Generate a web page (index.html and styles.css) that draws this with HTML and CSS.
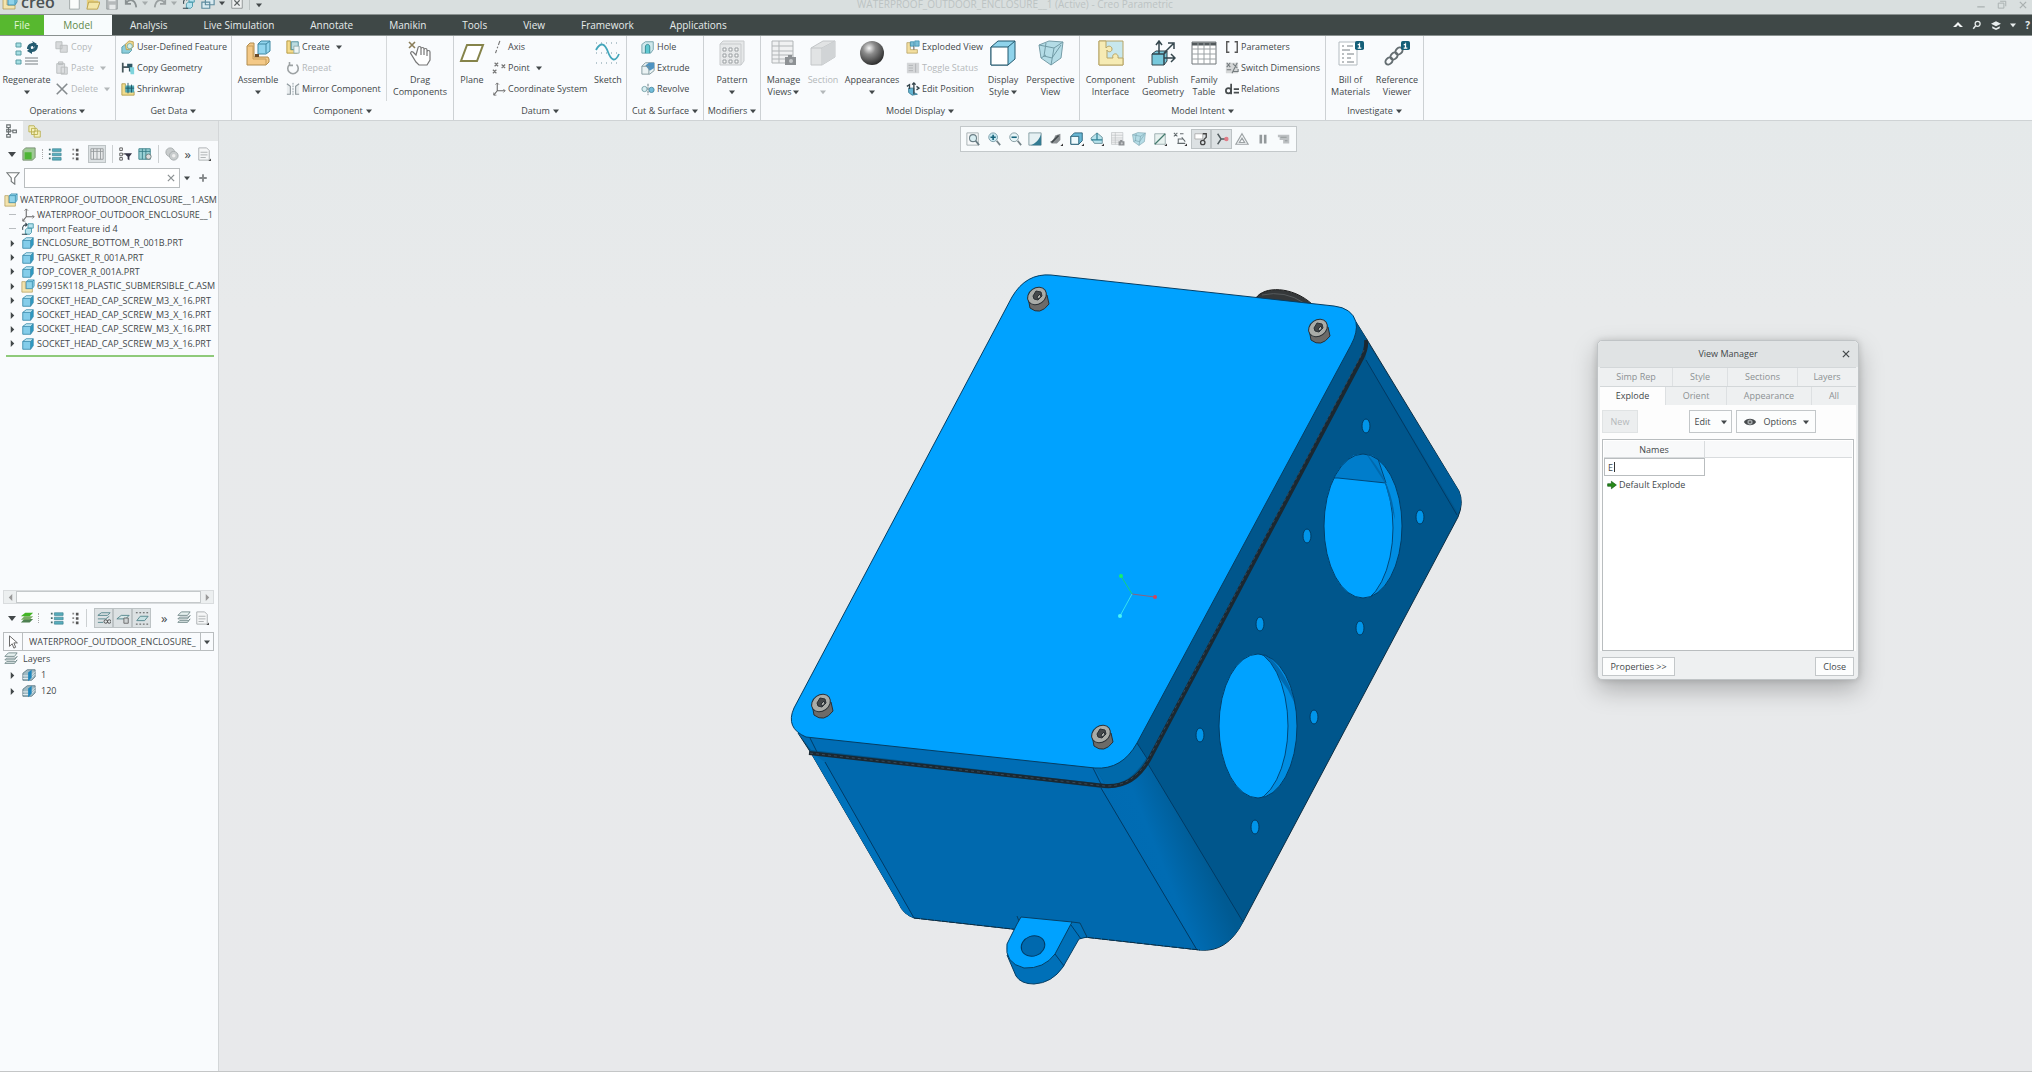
FILE: index.html
```html
<!DOCTYPE html>
<html lang="en">
<head>
<meta charset="utf-8">
<title>WATERPROOF_OUTDOOR_ENCLOSURE__1 (Active) - Creo Parametric</title>
<link rel="stylesheet" href="styles.css">
</head>
<body>
<svg class="sprite" aria-hidden="true">
  <symbol id="cube" viewBox="0 0 16 16"><path d="M2 5l4-3h8v8l-3 4H2z" fill="#2f9cc4"/><path d="M2 5l4-3h8l-3 3z" fill="#c3ecf8"/><path d="M2 5h9v9H2z" fill="#84cdea"/><path d="M2 5l4-3h8v8l-3 4H2zM2 5h9v9M11 5l3-3" fill="none" stroke="#3583a3" stroke-width=".8"/></symbol>
  <symbol id="asm" viewBox="0 0 16 16"><path d="M1 3h4v8h8v4H1z" fill="#f3e4ae" stroke="#b09a58" stroke-width=".8"/><path d="M6 3l2-2h7v7l-2 3H6z" fill="#8fd3ea" stroke="#2f86a8" stroke-width=".8"/><path d="M6 3h7v7M13 3l2-2" fill="none" stroke="#2f86a8" stroke-width=".8"/></symbol>
  <symbol id="csys" viewBox="0 0 16 16"><path d="M6 1v9h9M6 10l-4 5" fill="none" stroke="#666" stroke-width="1.2"/><path d="M4 3l2-2 2 2M13 8l2 2-2 2M2 12v3h3" fill="none" stroke="#777"/></symbol>
  <symbol id="import" viewBox="0 0 16 16"><path d="M8 2h6v5H8zM5 9l2-2h5v5l-2 2H5z" fill="#b5e2ee" stroke="#4596a8"/><path d="M2 9c-1-5 2-6 5-6M5 1l2 2-2 2M1 14h6" fill="none" stroke="#36474f" stroke-width="1.2"/></symbol>
  <symbol id="copy" viewBox="0 0 16 16"><path d="M1 2h7v8H1zM6 6h8v8H6z" fill="#d8dadc" stroke="#b8bbbd"/></symbol>
  <symbol id="paste" viewBox="0 0 16 16"><path d="M2 3h9v11H2zM4 1h5v3H4zM7 7h7v8H7z" fill="#dcdee0" stroke="#b8bbbd"/></symbol>
  <symbol id="delete" viewBox="0 0 16 16"><path d="M2 2l12 12M14 2L2 14" stroke="#858b8e" stroke-width="1.8"/></symbol>
  <symbol id="udf" viewBox="0 0 16 16"><path d="M1 8l4-3h7v7l-3 3H1z" fill="#8acddc" stroke="#5799a5"/><path d="M5 5l4-4 5 1v6l-4 3H6z" fill="#f1d98d" stroke="#b89b4c"/><circle cx="10" cy="7" r="3" fill="#d6eee9" stroke="#76aaa5"/></symbol>
  <symbol id="copygeom" viewBox="0 0 16 16"><path d="M2 2v11M2 7h8" stroke="#46565c" stroke-width="2"/><path d="M7 3h6v9H9V7H7z" fill="#2f5664"/><path d="M10 7h5v8h-4z" fill="#7ed4dd"/></symbol>
  <symbol id="shrink" viewBox="0 0 16 16"><path d="M1 2h4v9h10v4H1z" fill="#f0dc8e" stroke="#b49e4d"/><path d="M5 4h10v8H5z" fill="#4fa9b5"/><path d="M8 1v12M5 7h10M12 3v9" stroke="#1b5362"/></symbol>
  <symbol id="create" viewBox="0 0 16 16"><path d="M1 1h4v10h8v4H1z" fill="#f5dc8c" stroke="#b09338"/><path d="M6 2h8v9H6z" fill="#bcdce0" stroke="#488c98"/><path d="M9 7h6v8H9z" fill="#eef5f4" stroke="#8eaaab"/></symbol>
  <symbol id="repeat" viewBox="0 0 16 16"><path d="M4 4a6 6 0 1 0 8 0M4 1v4h4" fill="none" stroke="#9da2a4" stroke-width="1.8"/></symbol>
  <symbol id="mirror" viewBox="0 0 16 16"><path d="M1 2l4 3v9H1M15 2l-4 3v9h4" fill="#e9edef" stroke="#8e989d" stroke-width="1.3"/><path d="M8 1v14" stroke="#829098" stroke-dasharray="2 1"/></symbol>
  <symbol id="axis" viewBox="0 0 16 16"><path d="M9 1L4 15" stroke="#777" stroke-width="1.3" stroke-dasharray="5 2 2 2"/></symbol>
  <symbol id="point" viewBox="0 0 16 16"><path d="M3 2l4 4M7 2L3 6M11 4l4 4M15 4l-4 4M1 10l4 4M5 10l-4 4" stroke="#777" stroke-width="1.3"/></symbol>
  <symbol id="hole" viewBox="0 0 16 16"><path d="M1 5l4-3h9v9l-3 4H1z" fill="#cfe8ec" stroke="#6d9da6"/><path d="M5 15V8c0-4 5-4 5 0v7" fill="#5fc8d1" stroke="#2c838e"/></symbol>
  <symbol id="extrude" viewBox="0 0 16 16"><path d="M1 6l4-4h10v9l-5 4H1z" fill="#eaf2f3" stroke="#7b9298"/><path d="M5 5l4-3h6v6l-5 3z" fill="#4e93c2"/><path d="M1 6h8v9" fill="none" stroke="#7b9298"/></symbol>
  <symbol id="revolve" viewBox="0 0 16 16"><circle cx="4" cy="8" r="3" fill="#d8eef1" stroke="#6f9ba4"/><circle cx="12" cy="9" r="3" fill="#73bddb" stroke="#4c899f"/><path d="M8 2v13" stroke="#536c74" stroke-dasharray="3 1"/></symbol>
  <symbol id="exploded" viewBox="0 0 16 16"><path d="M1 3h4v8h8v4H1z" fill="#f3dfa0" stroke="#b09a58" stroke-width=".8"/><path d="M5 2h4v5H5zM10 1h5v6h-5z" fill="#78bdd6" stroke="#2f86a8" stroke-width=".8"/><path d="M9 7v4" stroke="#444"/></symbol>
  <symbol id="toggle" viewBox="0 0 16 16"><path d="M1 2h14v12H1z" fill="#d4d6d8"/><path d="M3 5h5M3 8h5M3 11h5M11 3v10" stroke="#aeb1b4"/></symbol>
  <symbol id="editpos" viewBox="0 0 16 16"><path d="M3 7h6v5l4 2-6 1-4-3z" fill="#64b5d4" stroke="#397c94"/><path d="M9 1v13M7 3l2-2 2 2M12 5l3 2-3 2M1 5l3-2v5" fill="none" stroke="#33434a" stroke-width="1.5"/></symbol>
  <symbol id="params" viewBox="0 0 16 16"><path d="M5 2H2v12h3M11 2h3v12h-3" fill="none" stroke="#555" stroke-width="1.6"/></symbol>
  <symbol id="switch" viewBox="0 0 16 16"><path d="M1 2h14v12H1z" fill="#d4d6d7"/><path d="M2 2l4 5M6 2L2 7M8 14l6-12M2 10h5M9 12h6v-3M9 3l5 5" stroke="#747b7e" stroke-width="1.2" fill="none"/></symbol>
  <symbol id="relations" viewBox="0 0 16 16"><circle cx="4" cy="10" r="3" fill="none" stroke="#484d4f" stroke-width="2"/><path d="M7 2v12M10 8h6M10 12h6" stroke="#484d4f" stroke-width="2"/></symbol>
  <symbol id="regen" viewBox="0 0 26 26"><path d="M2 3h5v4H2zM2 11h5v4H2zM2 20h5v4H2z" fill="#a6dfe3" stroke="#5b9da5"/><path d="M11 18h13M11 21h13M11 24h13" stroke="#777e82"/><path d="M13 9c0-4 3-6 6-6l-1-2 5 3-4 4v-2c-2 0-3 1-3 3zM24 5c0 4-2 7-6 7v2l-5-3 4-4v2c3 0 4-2 4-4z" fill="#245b70"/></symbol>
  <symbol id="assemble" viewBox="0 0 26 26"><path d="M2 6l3-3h4v14h14l1 2v3l-3 3H2z" fill="#f4c987" stroke="#b08c4e"/><path d="M2 6h6v13h13v6" fill="none" stroke="#c69d5a"/><path d="M13 4l3-3h9v10l-4 3h-8z" fill="#92d5ee" stroke="#3f87a2"/><path d="M13 4h8v9M21 4l4-3" fill="none" stroke="#3f87a2"/><path d="M10 14h4v3h-4z" fill="#6d4c28"/></symbol>
  <symbol id="hand" viewBox="0 0 26 26"><path d="M9 15l-3-3c-2-1-3 1-2 2l5 8 3 3h8l3-5v-8c0-2-3-2-3 0v-2c0-2-3-2-3 0V9c0-2-3-2-3 0V8c0-2-3-2-3 0zM14 9v6M17 10v5M20 12v4" fill="#fff" stroke="#777" stroke-width="1.2"/><path d="M2 2l6 6M8 2L2 8" stroke="#8a7d58" stroke-width="1.6"/></symbol>
  <symbol id="plane" viewBox="0 0 26 26"><path d="M8 5h16l-6 16H2z" fill="#fff" stroke="#85834a" stroke-width="2"/></symbol>
  <symbol id="sketch" viewBox="0 0 26 26"><path d="M1 3h24M1 13h24M1 23h24" stroke="#7494a1" stroke-dasharray="1 4"/><path d="M1 10C6 1 10 4 13 12s7 11 11 2" fill="none" stroke="#43a6bb" stroke-width="1.8"/></symbol>
  <symbol id="pattern" viewBox="0 0 26 26"><path d="M1 4l3-3h21v20l-3 4H1z" fill="#e6e8e9" stroke="#c8cbcd"/><path d="M1 4h21v21" fill="none" stroke="#c8cbcd"/><path d="M4 8h3v3H4zM10 8h3v3h-3zM16 8h3v3h-3zM4 14h3v3H4zM10 14h3v3h-3zM16 14h3v3h-3zM4 20h3v3H4zM10 20h3v3h-3zM16 20h3v3h-3z" fill="#f9fafa" stroke="#9a9fa2"/></symbol>
  <symbol id="manage" viewBox="0 0 26 26"><path d="M1 1h21v22H1zM1 6h21M1 11h21M1 15h21M1 19h21M8 1v22" fill="#f0f1f2" stroke="#b1b5b7"/><path d="M14 17h11v8H14zM17 15h4v3h-4z" fill="#8d9194"/><circle cx="20" cy="21" r="2" fill="#c5c8ca"/></symbol>
  <symbol id="section" viewBox="0 0 26 26"><path d="M1 8l12-7h12v16l-13 8H1z" fill="#e1e3e4" stroke="#c3c6c8"/><path d="M1 8h11v17M12 8l13-7" fill="none" stroke="#c3c6c8"/><path d="M12 8l13-7v16l-13 8z" fill="#d1d4d6"/></symbol>
  <symbol id="sphere" viewBox="0 0 26 26"><circle cx="13" cy="13" r="12" fill="url(#ball)"/></symbol>
  <symbol id="display" viewBox="0 0 26 26"><path d="M1 7l7-6h17v18l-7 6H1z" fill="#8fd3eb" stroke="#23596e"/><path d="M1 7h17v18H1z" fill="#fff" stroke="#23596e"/><path d="M18 7l7-6" stroke="#23596e"/></symbol>
  <symbol id="persp" viewBox="0 0 26 26"><path d="M1 5l10-4 14 1-2 16-10 7L3 18z" fill="#b4dce6" stroke="#769da8"/><path d="M1 5l15 3 9-6M16 8l-3 17M8 3l-2 13 8 2 9-13M3 18l5-3" fill="none" stroke="#719ba6"/></symbol>
  <symbol id="interface" viewBox="0 0 26 26"><path d="M1 1h24v24H1z" fill="#c7e7ed" stroke="#b7a464"/><path d="M1 1h7v7c2-3 6-2 6 1 0 4-5 3-5 1v8h6c-2-5 6-6 5 0h5v7H1z" fill="#f6ebb4" stroke="#b7a464"/></symbol>
  <symbol id="publish" viewBox="0 0 26 26"><path d="M2 14l4-3h11v10l-3 4H2z" fill="#78c9dc" stroke="#34464d"/><path d="M2 14h12v11M14 14l3-3M9 14V2M6 5l3-4 3 4M14 13l9-9M18 3h6v6M14 18h11M21 14l4 4-4 4" fill="none" stroke="#34464d" stroke-width="1.5"/></symbol>
  <symbol id="family" viewBox="0 0 26 26"><path d="M1 2h24v22H1z" fill="#fff" stroke="#70777a"/><path d="M1 4h24" stroke="#535a5d" stroke-width="3"/><path d="M1 9h24M1 14h24M1 19h24M7 3v21M13 3v21M19 3v21" stroke="#9ba1a4"/></symbol>
  <symbol id="info" viewBox="0 0 10 10"><rect width="10" height="10" rx="2" fill="#145f78"/><path d="M5 2v1M3 4h2v4M3 8h4" stroke="#fff" stroke-width="1.4" fill="none"/></symbol>
  <symbol id="bom" viewBox="0 0 26 26"><path d="M1 2h18v23H1z" fill="#fff" stroke="#b3bbc0"/><path d="M4 6h2M9 6h6M4 10h8M4 14h2M9 14h7M4 18h2M9 18h4M4 22h2M9 22h7" stroke="#777f83"/><use href="#info" x="17" y="0" width="9" height="11"/></symbol>
  <symbol id="chain" viewBox="0 0 26 26"><g fill="none" stroke="#656e72" stroke-width="2"><ellipse cx="5" cy="21" rx="4" ry="3" transform="rotate(-45 5 21)"/><ellipse cx="10" cy="16" rx="4" ry="3" transform="rotate(-45 10 16)"/><ellipse cx="15" cy="11" rx="4" ry="3" transform="rotate(-45 15 11)"/></g><use href="#info" x="17" y="0" width="9" height="11"/></symbol>
  <symbol id="list" viewBox="0 0 16 16"><path d="M1 3h2M1 8h2M1 13h2" stroke="#466" stroke-width="2"/><path d="M5 2h10v3H5zM5 7h10v3H5zM5 12h10v3H5z" fill="#58aebe" stroke="#347c8a" stroke-width=".7"/></symbol>
  <symbol id="list2" viewBox="0 0 16 16"><path d="M5 3h2M5 8h2M5 13h2" stroke="#888" stroke-width="2"/><path d="M9 2h3v3H9zM9 7h3v3H9zM9 12h3v3H9z" fill="#555"/></symbol>
  <symbol id="tablei" viewBox="0 0 16 16"><path d="M1 2h14v12H1zM1 5h14M4 2v12M8 2v12M12 2v12" fill="#e7e9ea" stroke="#929799"/></symbol>
  <symbol id="treei" viewBox="0 0 16 16"><path d="M2 1h4v3H2zM2 6h4v3H2zM2 12h4v3H2zM9 7h4v3H9zM4 4v8M6 8h3" fill="none" stroke="#6a7072" stroke-width="1.3"/></symbol>
  <symbol id="treefilter" viewBox="0 0 16 16"><path d="M2 1h3v3H2zM2 7h3v3H2zM2 12h3v3H2zM5 8h3" fill="none" stroke="#555"/><path d="M7 7h9l-3 4v4l-2-1v-3z" fill="#334"/></symbol>
  <symbol id="column" viewBox="0 0 16 16"><path d="M1 2h13v12H1zM1 5h13M5 2v12M9 2v12" fill="#9ad1d5" stroke="#367d86"/><circle cx="12" cy="11" r="3" fill="#ddd" stroke="#677"/></symbol>
  <symbol id="gear" viewBox="0 0 16 16"><circle cx="6" cy="6" r="5" fill="#c8cccd" stroke="#a5aaac"/><circle cx="10" cy="10" r="5" fill="#c8cccd" stroke="#a5aaac"/><circle cx="10" cy="10" r="2" fill="#eee"/></symbol>
  <symbol id="page" viewBox="0 0 16 16"><path d="M2 1h9l3 3v11H2z" fill="#f5f6f7" stroke="#a7acae"/><path d="M4 6h8M4 9h8M4 12h6" stroke="#a7acae"/><path d="M13 16h3v-3z" fill="#444"/></symbol>
  <symbol id="folders" viewBox="0 0 16 16"><path d="M1 2h6l1 2v5H1zM4 5h6l1 2v5H4zM7 8h7v7H7z" fill="#f4f0bd" stroke="#b8ae4e"/></symbol>
  <symbol id="greencube" viewBox="0 0 16 16"><path d="M1 4l3-3h11v11l-3 3H1z" fill="#9fca95" stroke="#75896f"/><path d="M3 6h8v8H3z" fill="#4eb536"/></symbol>
  <symbol id="funnel" viewBox="0 0 16 16"><path d="M1 2h14l-5 6v7l-4-3V8z" fill="#fff" stroke="#737879" stroke-width="1.3"/></symbol>
  <symbol id="layers" viewBox="0 0 16 16"><path d="M1 5l4-4h10l-3 4zM1 9l2-2h10l2-2-3 4zM1 13l2-2h10l2-2-3 4z" fill="#e6f0ef" stroke="#6f8687"/></symbol>
  <symbol id="glayers" viewBox="0 0 16 16"><path d="M1 13l4-4h10l-4 4z" fill="#4d8050"/><path d="M1 10l4-4h10l-4 4z" fill="#78aa62"/><path d="M1 6l5-4h9l-4 4z" fill="#43b526"/></symbol>
  <symbol id="layerview" viewBox="0 0 16 16"><path d="M1 5l4-3h10l-3 3zM1 9h9l4-3M1 13h6" fill="none" stroke="#4e8188"/><circle cx="10" cy="12" r="2" fill="none" stroke="#444"/><circle cx="14" cy="12" r="2" fill="none" stroke="#444"/></symbol>
  <symbol id="layerbox" viewBox="0 0 16 16"><path d="M1 9l5-4h9l-4 4z" fill="#d8e8e8" stroke="#4e8188"/><path d="M9 8h5v6H9z" fill="#ced3d4" stroke="#666"/></symbol>
  <symbol id="layersel" viewBox="0 0 16 16"><path d="M1 2h14M1 15h14" stroke="#444" stroke-dasharray="2 2"/><path d="M2 11l4-5h9l-4 5z" fill="#c6e0e2" stroke="#4e8188"/></symbol>
  <symbol id="layeritem" viewBox="0 0 16 16"><path d="M1 6l5-4h9v8l-4 4H1z" fill="#9fb9c2" stroke="#5c7883"/><path d="M1 9h9l5-5M1 12h9l5-5" stroke="#e9f1f4" fill="none"/><path d="M7 15V5l4-3v9z" fill="#1d86bd"/></symbol>
  <symbol id="cursor" viewBox="0 0 16 16"><path d="M4 1v12l3-3 2 5 2-1-2-5h4z" fill="#fff" stroke="#555"/></symbol>
  <symbol id="refit" viewBox="0 0 16 16"><path d="M1 1h13v14H1z" fill="#f7f9fa" stroke="#a1aaad"/><circle cx="8" cy="7" r="4" fill="#d7edf1" stroke="#6b7f86" stroke-width="1.2"/><path d="M11 10l4 5" stroke="#687c83" stroke-width="2"/></symbol>
  <symbol id="zin" viewBox="0 0 16 16"><circle cx="7" cy="6" r="5" fill="#c9e9f1" stroke="#7498a4"/><path d="M7 3v6M4 6h6" stroke="#17647c" stroke-width="1.8"/><path d="M11 10l4 5" stroke="#748388" stroke-width="2"/></symbol>
  <symbol id="zout" viewBox="0 0 16 16"><circle cx="7" cy="6" r="5" fill="#e6f4f6" stroke="#7d959b"/><path d="M4 6h6" stroke="#17647c" stroke-width="1.8"/><path d="M11 10l4 5" stroke="#748388" stroke-width="2"/></symbol>
  <symbol id="repaint" viewBox="0 0 16 16"><path d="M1 1h14v14H1z" fill="#e6f1f3" stroke="#7f989f"/><path d="M15 2v13H3c6-2 10-6 12-13z" fill="#337b92"/></symbol>
  <symbol id="shade" viewBox="0 0 16 16"><path d="M1 11c4-1 5-4 6-7l6-2v7l-4 4H3z" fill="#8a8f92"/><path d="M3 12l8-8" stroke="#434a4d" stroke-width="2"/><path d="M13 16h3v-3z" fill="#333"/></symbol>
  <symbol id="dcube" viewBox="0 0 16 16"><path d="M1 5l4-4h9v9l-4 4H1z" fill="#68b7d4" stroke="#245c73"/><path d="M1 5h9v9H1z" fill="#eefafd" stroke="#245c73"/><path d="M13 16h3v-3z" fill="#333"/></symbol>
  <symbol id="saved" viewBox="0 0 16 16"><path d="M1 7l7-6 6 5v7H5z" fill="#b7e3ec" stroke="#668d97"/><path d="M8 1v8H1M8 9h6" stroke="#2f8195" fill="none" stroke-width="1.4"/><path d="M13 16h3v-3z" fill="#333"/></symbol>
  <symbol id="datum" viewBox="0 0 16 16"><path d="M2 2h12v12H2z" fill="#e7f1ef" stroke="#98aaab"/><path d="M2 14L14 2" stroke="#447b6e" stroke-width="1.5"/><path d="M13 16h3v-3z" fill="#333"/></symbol>
  <symbol id="datums" viewBox="0 0 16 16"><path d="M1 1l4 4M5 1L1 5M8 2h4M5 13h9M6 13V8h5M10 6l4 5" stroke="#626a6d" fill="none" stroke-width="1.2"/><path d="M13 16h3v-3z" fill="#333"/></symbol>
  <symbol id="annot" viewBox="0 0 16 16"><path d="M1 2h9v6H1z" fill="#fff" stroke="#aaa"/><path d="M10 2h4v4l-3 3" fill="none" stroke="#444" stroke-width="1.5"/><circle cx="10" cy="12" r="2.5" fill="none" stroke="#444" stroke-width="1.5"/></symbol>
  <symbol id="spin" viewBox="0 0 16 16"><path d="M3 2l4 6-4 6M7 8h7" stroke="#505b5e" stroke-width="1.6" fill="none"/><circle cx="13" cy="8" r="2.5" fill="#e07b86"/></symbol>
  <symbol id="tri" viewBox="0 0 16 16"><path d="M8 2l7 12H1zM8 7l3 5H5z" fill="none" stroke="#9da3a5" stroke-width="1.4"/></symbol>
  <symbol id="pause" viewBox="0 0 16 16"><path d="M4 3h3v10H4zM9 3h3v10H9z" fill="#93999b"/></symbol>
  <symbol id="stop" viewBox="0 0 16 16"><path d="M1 3h13v10H7V9H3V6H1z" fill="#bcc0c2"/><path d="M4 6h7M9 10h3" stroke="#8e9496"/></symbol>
  <symbol id="newf" viewBox="0 0 16 16"><path d="M3 0h7l4 4v11H3z" fill="#fafcfb" stroke="#9aa2a2"/></symbol>
  <symbol id="openf" viewBox="0 0 16 16"><path d="M1 3h6l2 2h5v9H1z" fill="#e6cf7b"/><path d="M3 7h13l-3 8H1z" fill="#f3e6a8" stroke="#b69c48"/></symbol>
  <symbol id="savef" viewBox="0 0 16 16"><path d="M2 1h12v14H2z" fill="#b6babb" stroke="#949a9b"/><path d="M4 1h8v5H4zM5 10h7v5H5z" fill="#e6e9e9"/></symbol>
  <symbol id="undo" viewBox="0 0 16 16"><path d="M2 3v6h6M2 9c4-7 11-5 12 4" fill="none" stroke="#8a9192" stroke-width="2"/></symbol>
  <symbol id="redo" viewBox="0 0 16 16"><path d="M14 3v6H8M14 9C10 2 3 4 2 13" fill="none" stroke="#9aa0a1" stroke-width="2"/></symbol>
  <symbol id="wins" viewBox="0 0 16 16"><path d="M5 2h10v8H5zM1 7h9v7H1z" fill="#d9eaf0" stroke="#5c8a9d" stroke-width="1.3"/></symbol>
  <symbol id="closewin" viewBox="0 0 16 16"><path d="M2 2h12v12H2z" fill="#eef0f0" stroke="#8a9091"/><path d="M5 5l6 6M11 5l-6 6" stroke="#5c6263" stroke-width="1.6"/></symbol>
  <symbol id="eye" viewBox="0 0 16 16"><path d="M1 8c3-5 11-5 14 0-3 5-11 5-14 0z" fill="#45494b"/><circle cx="8" cy="8" r="3" fill="#a0a5a7"/><circle cx="8" cy="8" r="1" fill="#333"/></symbol>
  <symbol id="arrow" viewBox="0 0 16 16"><path d="M1 6h6V2l8 6-8 6v-4H1z" fill="#278b18" stroke="#0c5210"/></symbol>
  <symbol id="search" viewBox="0 0 16 16"><circle cx="9" cy="6" r="4" fill="none" stroke="#e9eeee" stroke-width="2"/><path d="M6 9l-4 5" stroke="#e9eeee" stroke-width="2.5"/></symbol>
  <symbol id="hat" viewBox="0 0 16 16"><path d="M0 6l8-4 8 4-8 4zM2 10l6 3 6-3v3l-6 3-6-3z" fill="#e9eeee"/></symbol>
  <symbol id="up" viewBox="0 0 16 16"><path d="M0 11l8-8 8 8h-5L8 8l-3 3z" fill="#f2f5f5"/></symbol>
  <symbol id="min" viewBox="0 0 16 16"><path d="M2 11h12" stroke="#a9b0b0" stroke-width="2"/></symbol>
  <symbol id="restore" viewBox="0 0 16 16"><path d="M5 2h9v8M2 5h9v8H2z" fill="none" stroke="#a9b0b0" stroke-width="1.5"/></symbol>
  <symbol id="x" viewBox="0 0 16 16"><path d="M3 3l10 10M13 3L3 13" stroke="currentColor" stroke-width="2"/></symbol>
  <symbol id="plus" viewBox="0 0 16 16"><path d="M8 2v12M2 8h12" stroke="#85898b" stroke-width="3"/></symbol>
  <symbol id="d" viewBox="0 0 8 8"><path d="M0 2h8L4 7z" fill="currentColor"/></symbol>
  <symbol id="r" viewBox="0 0 8 8"><path d="M2 0v8l4-4z" fill="currentColor"/></symbol>
  <symbol id="l" viewBox="0 0 8 8"><path d="M6 0v8L2 4z" fill="currentColor"/></symbol>
  <defs><radialGradient id="ball" cx=".38" cy=".3" r=".75"><stop offset="0" stop-color="#f4f4f4"/><stop offset=".35" stop-color="#8b8b8b"/><stop offset="1" stop-color="#262626"/></radialGradient></defs>
</svg>

<div class="app">
  <header class="titlebar">
    <div class="quick">
      <svg class="i16"><use href="#asm"/></svg><strong class="brand">creo<sup>°</sup></strong>
      <button aria-label="New"><svg class="i14"><use href="#newf"/></svg></button>
      <button aria-label="Open"><svg class="i14"><use href="#openf"/></svg></button>
      <button aria-label="Save"><svg class="i14"><use href="#savef"/></svg></button>
      <button aria-label="Undo"><svg class="i14"><use href="#undo"/></svg><svg class="caret pale"><use href="#d"/></svg></button>
      <button aria-label="Redo"><svg class="i14"><use href="#redo"/></svg><svg class="caret pale"><use href="#d"/></svg></button>
      <button aria-label="Regenerate"><svg class="i14"><use href="#import"/></svg></button>
      <button aria-label="Windows"><svg class="i14"><use href="#wins"/></svg><svg class="caret"><use href="#d"/></svg></button>
      <button aria-label="Close window"><svg class="i14"><use href="#closewin"/></svg></button>
      <button class="custom" aria-label="Customize"><svg class="caret"><use href="#d"/></svg></button>
    </div>
    <div class="doc-title">WATERPROOF_OUTDOOR_ENCLOSURE__1 (Active) - Creo Parametric</div>
    <div class="window-buttons">
      <button aria-label="Minimize"><svg class="i10"><use href="#min"/></svg></button>
      <button aria-label="Restore"><svg class="i10"><use href="#restore"/></svg></button>
      <button aria-label="Close"><svg class="i10"><use href="#x"/></svg></button>
    </div>
  </header>

  <nav class="tabs">
    <button class="file">File</button><button class="active">Model</button><button>Analysis</button><button>Live Simulation</button><button>Annotate</button><button>Manikin</button><button>Tools</button><button>View</button><button>Framework</button><button>Applications</button>
    <div class="tab-tools">
      <button aria-label="Collapse ribbon"><svg class="i10"><use href="#up"/></svg></button>
      <button aria-label="Search"><svg class="i10"><use href="#search"/></svg></button>
      <button aria-label="Learning"><svg class="i10"><use href="#hat"/></svg></button>
      <button aria-label="More"><svg class="caret"><use href="#d"/></svg></button>
      <button aria-label="Help"><b>?</b></button>
    </div>
  </nav>

  <section class="ribbon">
    <div class="group ops"><div class="tools">
      <button class="big"><svg><use href="#regen"/></svg>Regenerate<svg class="caret"><use href="#d"/></svg></button>
      <div class="col">
        <button disabled><svg><use href="#copy"/></svg>Copy</button>
        <button disabled><svg><use href="#paste"/></svg>Paste<svg class="caret"><use href="#d"/></svg></button>
        <button disabled><svg><use href="#delete"/></svg>Delete<svg class="caret"><use href="#d"/></svg></button>
      </div></div><button class="name">Operations<svg class="caret"><use href="#d"/></svg></button></div>
    <div class="group get"><div class="tools"><div class="col">
        <button><svg><use href="#udf"/></svg>User-Defined Feature</button>
        <button><svg><use href="#copygeom"/></svg>Copy Geometry</button>
        <button><svg><use href="#shrink"/></svg>Shrinkwrap</button>
      </div></div><button class="name">Get Data<svg class="caret"><use href="#d"/></svg></button></div>
    <div class="group comp"><div class="tools">
      <button class="big"><svg><use href="#assemble"/></svg>Assemble<svg class="caret"><use href="#d"/></svg></button>
      <div class="col">
        <button><svg><use href="#create"/></svg>Create<svg class="caret"><use href="#d"/></svg></button>
        <button disabled><svg><use href="#repeat"/></svg>Repeat</button>
        <button><svg><use href="#mirror"/></svg>Mirror Component</button>
      </div>
      <button class="big ruled"><svg><use href="#hand"/></svg>Drag<br>Components</button>
      </div><button class="name">Component<svg class="caret"><use href="#d"/></svg></button></div>
    <div class="group datum"><div class="tools">
      <button class="big"><svg><use href="#plane"/></svg>Plane</button>
      <div class="col">
        <button><svg><use href="#axis"/></svg>Axis</button>
        <button><svg><use href="#point"/></svg>Point<svg class="caret"><use href="#d"/></svg></button>
        <button><svg><use href="#csys"/></svg>Coordinate System</button>
      </div>
      <button class="big"><svg><use href="#sketch"/></svg>Sketch</button>
      </div><button class="name">Datum<svg class="caret"><use href="#d"/></svg></button></div>
    <div class="group cut"><div class="tools"><div class="col">
        <button><svg><use href="#hole"/></svg>Hole</button>
        <button><svg><use href="#extrude"/></svg>Extrude</button>
        <button><svg><use href="#revolve"/></svg>Revolve</button>
      </div></div><button class="name">Cut &amp; Surface<svg class="caret"><use href="#d"/></svg></button></div>
    <div class="group mod"><div class="tools">
      <button class="big"><svg><use href="#pattern"/></svg>Pattern<svg class="caret"><use href="#d"/></svg></button>
      </div><button class="name">Modifiers<svg class="caret"><use href="#d"/></svg></button></div>
    <div class="group disp"><div class="tools">
      <button class="big"><svg><use href="#manage"/></svg>Manage<span>Views<svg class="caret"><use href="#d"/></svg></span></button>
      <button class="big" disabled><svg><use href="#section"/></svg>Section<svg class="caret"><use href="#d"/></svg></button>
      <button class="big"><svg><use href="#sphere"/></svg>Appearances<svg class="caret"><use href="#d"/></svg></button>
      <div class="col">
        <button><svg><use href="#exploded"/></svg>Exploded View</button>
        <button disabled><svg><use href="#toggle"/></svg>Toggle Status</button>
        <button><svg><use href="#editpos"/></svg>Edit Position</button>
      </div>
      <button class="big"><svg><use href="#display"/></svg>Display<span>Style<svg class="caret"><use href="#d"/></svg></span></button>
      <button class="big"><svg><use href="#persp"/></svg>Perspective<br>View</button>
      </div><button class="name">Model Display<svg class="caret"><use href="#d"/></svg></button></div>
    <div class="group intent"><div class="tools">
      <button class="big"><svg><use href="#interface"/></svg>Component<br>Interface</button>
      <button class="big"><svg><use href="#publish"/></svg>Publish<br>Geometry</button>
      <button class="big"><svg><use href="#family"/></svg>Family<br>Table</button>
      <div class="col">
        <button><svg><use href="#params"/></svg>Parameters</button>
        <button><svg><use href="#switch"/></svg>Switch Dimensions</button>
        <button><svg><use href="#relations"/></svg>Relations</button>
      </div></div><button class="name">Model Intent<svg class="caret"><use href="#d"/></svg></button></div>
    <div class="group inv"><div class="tools">
      <button class="big"><svg><use href="#bom"/></svg>Bill of<br>Materials</button>
      <button class="big"><svg><use href="#chain"/></svg>Reference<br>Viewer</button>
      </div><button class="name">Investigate<svg class="caret"><use href="#d"/></svg></button></div>
  </section>

  <div class="workspace">
    <aside class="sidebar">
      <div class="side-tabs"><button class="on" aria-label="Model Tree"><svg class="i14"><use href="#treei"/></svg></button><button aria-label="Folder Browser"><svg class="i14"><use href="#folders"/></svg></button></div>
      <div class="side-tools tree-tools">
        <button aria-label="Collapse"><svg class="caret"><use href="#d"/></svg></button>
        <button aria-label="Model"><svg class="i14"><use href="#greencube"/></svg></button><i class="grip"></i>
        <button aria-label="Expand all"><svg class="i14"><use href="#list"/></svg></button>
        <button aria-label="Collapse all"><svg class="i14"><use href="#list2"/></svg></button>
        <button class="pressed" aria-label="Columns"><svg class="i14"><use href="#tablei"/></svg></button><i class="rule"></i>
        <button aria-label="Tree filters"><svg class="i14"><use href="#treefilter"/></svg></button>
        <button aria-label="Tree columns"><svg class="i14"><use href="#column"/></svg></button><i class="rule"></i>
        <button aria-label="Settings"><svg class="i14"><use href="#gear"/></svg></button>
        <button class="more" aria-label="More">»</button>
        <button aria-label="Properties"><svg class="i14"><use href="#page"/></svg></button>
      </div>
      <div class="filter">
        <svg class="i14"><use href="#funnel"/></svg>
        <div class="filter-box"><input type="text" aria-label="Filter tree"><button aria-label="Clear"><svg class="i10"><use href="#x"/></svg></button></div>
        <button aria-label="Filter options"><svg class="caret"><use href="#d"/></svg></button>
        <button aria-label="Add"><svg class="i10"><use href="#plus"/></svg></button>
      </div>
      <ul class="tree">
        <li class="root"><svg class="i14"><use href="#asm"/></svg>WATERPROOF_OUTDOOR_ENCLOSURE__1.ASM</li>
        <li><i class="branch"></i><svg class="i14"><use href="#csys"/></svg>WATERPROOF_OUTDOOR_ENCLOSURE__1</li>
        <li><i class="branch"></i><svg class="i14"><use href="#import"/></svg>Import Feature id 4</li>
        <li><svg class="tw"><use href="#r"/></svg><svg class="i14"><use href="#cube"/></svg>ENCLOSURE_BOTTOM_R_001B.PRT</li>
        <li><svg class="tw"><use href="#r"/></svg><svg class="i14"><use href="#cube"/></svg>TPU_GASKET_R_001A.PRT</li>
        <li><svg class="tw"><use href="#r"/></svg><svg class="i14"><use href="#cube"/></svg>TOP_COVER_R_001A.PRT</li>
        <li><svg class="tw"><use href="#r"/></svg><svg class="i14"><use href="#asm"/></svg>69915K118_PLASTIC_SUBMERSIBLE_C.ASM</li>
        <li><svg class="tw"><use href="#r"/></svg><svg class="i14"><use href="#cube"/></svg>SOCKET_HEAD_CAP_SCREW_M3_X_16.PRT</li>
        <li><svg class="tw"><use href="#r"/></svg><svg class="i14"><use href="#cube"/></svg>SOCKET_HEAD_CAP_SCREW_M3_X_16.PRT</li>
        <li><svg class="tw"><use href="#r"/></svg><svg class="i14"><use href="#cube"/></svg>SOCKET_HEAD_CAP_SCREW_M3_X_16.PRT</li>
        <li><svg class="tw"><use href="#r"/></svg><svg class="i14"><use href="#cube"/></svg>SOCKET_HEAD_CAP_SCREW_M3_X_16.PRT</li>
      </ul>
      <div class="insert-line"></div>
      <div class="hscroll"><button aria-label="Scroll left"><svg class="tw"><use href="#l"/></svg></button><div class="thumb"></div><button aria-label="Scroll right"><svg class="tw"><use href="#r"/></svg></button></div>
      <div class="side-tools layer-tools">
        <button aria-label="Collapse"><svg class="caret"><use href="#d"/></svg></button>
        <button aria-label="Layers"><svg class="i14"><use href="#glayers"/></svg></button><i class="grip"></i>
        <button aria-label="Expand all"><svg class="i14"><use href="#list"/></svg></button>
        <button aria-label="Collapse all"><svg class="i14"><use href="#list2"/></svg></button><i class="rule"></i>
        <div class="trio"><button class="pressed" aria-label="Show layers"><svg class="i14"><use href="#layerview"/></svg></button><button class="pressed" aria-label="Layer items"><svg class="i14"><use href="#layerbox"/></svg></button><button class="pressed" aria-label="Select layers"><svg class="i14"><use href="#layersel"/></svg></button></div>
        <button class="more" aria-label="More">»</button>
        <button aria-label="Layer display"><svg class="i14"><use href="#layers"/></svg></button>
        <button aria-label="Layer settings"><svg class="i14"><use href="#page"/></svg></button>
      </div>
      <div class="picker"><button aria-label="Select"><svg class="i14"><use href="#cursor"/></svg></button><select aria-label="Active model"><option>WATERPROOF_OUTDOOR_ENCLOSURE_</option></select><svg class="caret"><use href="#d"/></svg></div>
      <ul class="layer-list">
        <li class="root"><svg class="i14"><use href="#layers"/></svg>Layers</li>
        <li><svg class="tw"><use href="#r"/></svg><svg class="i14"><use href="#layeritem"/></svg>1</li>
        <li><svg class="tw"><use href="#r"/></svg><svg class="i14"><use href="#layeritem"/></svg>120</li>
      </ul>
    </aside>

    <main class="canvas">
      <div class="view-tools">
        <button aria-label="Refit"><svg><use href="#refit"/></svg></button><button aria-label="Zoom in"><svg><use href="#zin"/></svg></button><button aria-label="Zoom out"><svg><use href="#zout"/></svg></button><button aria-label="Repaint"><svg><use href="#repaint"/></svg></button><button aria-label="Rendering"><svg><use href="#shade"/></svg></button><button aria-label="Display style"><svg><use href="#dcube"/></svg></button><button aria-label="Saved orientations"><svg><use href="#saved"/></svg></button><button aria-label="View manager"><svg><use href="#manage"/></svg></button><button aria-label="Perspective"><svg><use href="#persp"/></svg></button><button aria-label="Datum display"><svg><use href="#datum"/></svg></button><button aria-label="Datum filters"><svg><use href="#datums"/></svg></button><button class="pressed" aria-label="Annotations"><svg><use href="#annot"/></svg></button><button class="pressed" aria-label="Spin center"><svg><use href="#spin"/></svg></button><button aria-label="Simulate"><svg><use href="#tri"/></svg></button><button aria-label="Pause"><svg><use href="#pause"/></svg></button><button aria-label="Stop"><svg><use href="#stop"/></svg></button>
      </div>

      <svg class="model" viewBox="780 260 740 740" role="img" aria-label="Waterproof outdoor enclosure">
        <defs>
          <linearGradient id="fillet" gradientUnits="userSpaceOnUse" x1="1124" y1="850" x2="1194" y2="822"><stop offset="0" stop-color="#006bb2"/><stop offset=".4" stop-color="#006cb3"/><stop offset="1" stop-color="#005a92"/></linearGradient>
          <clipPath id="h1"><ellipse cx="1363" cy="526" rx="39" ry="72"/></clipPath>
          <clipPath id="h2"><ellipse cx="1258" cy="726" rx="39" ry="72"/></clipPath>
          <g id="screw" stroke="#293035" stroke-width="1"><path d="M-9 1L-7 12Q3 20 12 8L10-1z" fill="#6c6b69"/><ellipse rx="10" ry="8" fill="#a9aca8" transform="rotate(-35)"/><path d="M-4 0l3-5 5 1 1 4-4 4-4-1z" fill="#44484a"/><path d="M0 1l3-3 1 3-3 2z" fill="#a9aca8"/></g>
          <ellipse id="pin" rx="4" ry="7" fill="#0095ea" stroke="#003b63"/>
        </defs>
        <path d="M1256 298C1264 286 1292 286 1312 304z" fill="#35383a" stroke="#1c1c1c"/>
        <path d="M1262 295Q1285 290 1304 303" fill="none" stroke="#555a5c"/>
        <path d="M1356 322L1366 338L1459 491Q1464 503 1458 517L1243 922Q1227 953 1200 950L914 918Q903 914 899 904L811 753L798 733L1095 768L1137 743z" fill="#00568c" stroke="#0b2d43"/>
        <path d="M1366 340L1459 491Q1464 503 1458 513L1366 360z" fill="#005d98"/>
        <path d="M811 753L1101 788L1197 950L914 918Q903 914 899 904z" fill="#0069ae"/>
        <path d="M1101 788Q1135 790 1148 764L1243 922Q1227 953 1197 950z" fill="url(#fillet)"/>
        <path d="M811 753L825 762L914 918Q903 914 899 904z" fill="#0072bb"/>
        <path d="M1366 360L1457 515M1148 764L1243 922M1101 788L1197 950M825 762L914 918" stroke="#003a64" fill="none"/>
        <path d="M914 918L1200 950" stroke="#0b2d43" stroke-dasharray="6 1" fill="none"/>
        <path d="M798 733L1095 768L1105 784L811 750z" fill="#006db5"/>
        <path d="M1095 768Q1122 770 1137 743L1148 755Q1130 787 1105 784z" fill="#0069aa"/>
        <path d="M1356 322L1366 338Q1367 348 1362 358L1148 760L1137 743L1351 345z" fill="#00568c"/>
        <path d="M1093 768L1101 784M1137 743L1148 760M810 738l7 14" stroke="#003b65" fill="none"/>
        <path d="M1366 340Q1367 348 1362 358L1150 758Q1134 788 1105 786L809 753" stroke="#1b2831" stroke-width="4" fill="none"/>
        <path d="M1364 350L1150 756Q1134 787 1105 786L809 753" stroke="#35495a" stroke-width="1" stroke-dasharray="3 3" fill="none"/>
        <path d="M1051 275L1334 306Q1352 308 1356 322Q1358 332 1351 345L1137 743Q1122 770 1095 768L806 737Q785 728 794 708L1012 297Q1026 273 1051 275z" fill="#00a2ff" stroke="#063e63" stroke-width="1"/>
        <g clip-path="url(#h1)"><path d="M1320 450h85v155h-85z" fill="#008de1"/><ellipse cx="1354" cy="528" rx="39" ry="76" fill="#00a2ff" stroke="#004778"/><path d="M1320 450h55L1386 483L1338 478H1320z" fill="#007dcb" stroke="#004778"/><path d="M1365 452Q1392 480 1395 520L1385 483z" fill="#0069ad"/></g>
        <ellipse cx="1363" cy="526" rx="39" ry="72" fill="none" stroke="#003e68"/>
        <g clip-path="url(#h2)"><path d="M1215 650h85v155h-85z" fill="#008de1"/><path d="M1260 650Q1285 665 1298 710L1288 690z" fill="#006ab0"/><ellipse cx="1249" cy="726" rx="39" ry="76" fill="#00a2ff" stroke="#004778"/></g>
        <ellipse cx="1258" cy="726" rx="39" ry="72" fill="none" stroke="#003e68"/>
        <use href="#pin" x="1366" y="426"/><use href="#pin" x="1420" y="517"/><use href="#pin" x="1307" y="536"/><use href="#pin" x="1260" y="624"/><use href="#pin" x="1360" y="628"/><use href="#pin" x="1314" y="717"/><use href="#pin" x="1200" y="735"/><use href="#pin" x="1255" y="827"/>
        <use href="#screw" x="1037" y="296"/><use href="#screw" x="1318" y="328"/><use href="#screw" x="821" y="703"/><use href="#screw" x="1101" y="734"/>
        <path d="M1072 922L1080 923L1087 937L1079 939L1063 967Q1052 983 1034 984Q1021 984 1016 976L1007 955z" fill="#0070b8" stroke="#063e63"/>
        <path d="M1017 916L1022 929" stroke="#063e63"/>
        <path d="M1021 917L1072 922L1055 954Q1044 969 1024 968Q1004 963 1007 944L1017 924z" fill="#00a2ff" stroke="#063e63"/>
        <path d="M1055 954L1064 966M1071 925L1081 939" stroke="#003b65"/>
        <ellipse cx="1033" cy="946" rx="12" ry="10" fill="#0069ae" stroke="#003b65" transform="rotate(-20 1033 946)"/>
        <path d="M1132 594L1121 576" stroke="#13d37d"/><path d="M1132 594L1155 597" stroke="#91617c"/><path d="M1132 594L1120 616" stroke="#35e1f2"/>
        <circle cx="1121" cy="576" r="2" fill="#15f06b"/><circle cx="1155" cy="597" r="2" fill="#d0455b"/><circle cx="1120" cy="616" r="2" fill="#4af3f5"/>
      </svg>

      <section class="dialog" role="dialog" aria-label="View Manager">
        <header><h2>View Manager</h2><button aria-label="Close dialog"><svg class="i10"><use href="#x"/></svg></button></header>
        <div class="dtabs first"><button>Simp Rep</button><button>Style</button><button>Sections</button><button>Layers</button></div>
        <div class="dtabs second"><button class="on">Explode</button><button>Orient</button><button>Appearance</button><button>All</button></div>
        <div class="dbody">
          <div class="dactions"><button class="new" disabled>New</button><button class="edit">Edit<svg class="caret"><use href="#d"/></svg></button><button class="options"><svg class="i14"><use href="#eye"/></svg>Options<svg class="caret"><use href="#d"/></svg></button></div>
          <div class="dlist">
            <div class="dhead"><span>Names</span></div>
            <div class="name-edit"><input type="text" value="E" aria-label="Name"></div>
            <div class="ditem"><svg class="i10"><use href="#arrow"/></svg>Default Explode</div>
          </div>
        </div>
        <footer><button>Properties &gt;&gt;</button><button>Close</button></footer>
      </section>
    </main>
  </div>
</div>
</body>
</html>
```
FILE: styles.css
```css
* { box-sizing: border-box; }
body { margin: 0; font: 9px/12px "Open Sans", "Noto Sans", sans-serif; color: #43484a; background: #e8eaeb; }
button, input, select { font: inherit; color: inherit; border: 0; padding: 0; margin: 0; background: none; }
button { display: flex; align-items: center; justify-content: center; white-space: nowrap; }
button:disabled { color: #b4b8ba; }
svg { flex: none; display: block; }
ul { list-style: none; margin: 0; padding: 0; }
.sprite { position: absolute; width: 0; height: 0; }
.i16 { width: 16px; height: 16px; }
.i14 { width: 14px; height: 14px; }
.i10 { width: 10px; height: 10px; }
.caret { width: 6px; height: 6px; }
.pale { color: #a5abac; }

.app { display: flex; flex-direction: column; height: 100vh; overflow: hidden; border-bottom: 1px solid #c4c6c7; }

/* Title bar */
.titlebar { display: grid; grid-template-columns: 1fr auto 1fr; align-items: end; align-content: end; height: 14px; flex: none; overflow: hidden; padding: 0 4px 4px 2px; background: #d9dfdf; }
.brand { font-weight: 600; font-size: 16px; line-height: 16px; height: 16px; width: 41px; flex: none; color: #4c5354; }
.brand sup { font-size: 8px; line-height: 8px; }
.quick { display: flex; align-items: flex-end; gap: 5px; }
.quick > .i16 { margin-right: -2px; }
.quick button { gap: 4px; }
.custom { border-left: 1px solid #bcc3c3; padding-left: 6px; height: 10px; }
.doc-title { font-size: 10px; line-height: 12px; color: #bcc3c3; }
.window-buttons { display: flex; justify-content: flex-end; gap: 11px; color: #a9b0b0; }

/* Ribbon tabs */
.tabs { display: flex; height: 22px; flex: none; background: #3f4847; border-top: 1px solid #8a9190; border-bottom: 1px solid #8a9190; color: #e7ecec; font-size: 10px; }
.tabs > button { padding: 0 18px; }
.tabs .file { width: 44px; padding: 0; background: #57b82f; color: #e5f6da; }
.tabs .active { width: 68px; padding: 0; background: #f8fcfd; color: #5f8a4b; }
.tab-tools { display: flex; margin-left: auto; gap: 9px; padding-right: 2px; }

/* Ribbon */
.ribbon { display: flex; flex: none; height: 85px; background: #f9fbfd; border-bottom: 1px solid #cfd3d5; }
.group { display: flex; flex-direction: column; border-right: 1px solid #cdd1d4; }
.tools { display: grid; height: 65px; }
.col { display: grid; grid-template-rows: repeat(3, 21px); padding-left: 2px; }
.col button { justify-content: flex-start; gap: 2px; }
.col svg { width: 14px; height: 14px; }
.col .caret { width: 6px; height: 6px; margin-left: 4px; }
.big { flex-direction: column; justify-content: flex-start; padding-top: 4px; }
.big > svg:first-child { width: 26px; height: 26px; margin-bottom: 8px; }
.big > .caret { margin-top: 3px; }
.big span { display: flex; align-items: center; gap: 2px; }
.ruled { border-left: 1px solid #d5d8da; }
.name { margin-top: auto; height: 18px; gap: 3px; }
.ops { width: 116px; } .ops .tools { grid-template-columns: 53px 1fr; }
.get { width: 116px; } .get .col { padding-left: 5px; }
.comp { width: 222px; } .comp .tools { grid-template-columns: 52px 102px 1fr; }
.datum { width: 173px; } .datum .tools { grid-template-columns: 36px 100px 1fr; }
.cut { width: 77px; } .cut .col { padding-left: 14px; }
.mod { width: 57px; }
.disp { width: 319px; } .disp .tools { grid-template-columns: 45px 34px 64px 80px 38px 1fr; }
.intent { width: 246px; } .intent .tools { grid-template-columns: 61px 44px 38px 1fr; }
.inv { width: 98px; } .inv .tools { grid-template-columns: 49px 44px; }

/* Sidebar */
.workspace { display: flex; flex: 1; min-height: 0; }
.sidebar { display: flex; flex-direction: column; width: 219px; flex: none; background: #f9fbfd; border-right: 1px solid #d3d6d8; }
.side-tabs { display: flex; height: 20px; background: #e4e7e8; }
.side-tabs button { width: 23px; }
.side-tabs button + button { width: 24px; }
.side-tabs .on { background: #f9fbfd; }
.side-tools { display: flex; align-items: center; gap: 4px; padding: 0 7px 0 8px; height: 26px; }
.tree-tools { justify-content: space-between; }
.side-tools .caret { width: 8px; height: 8px; }
.more { font-size: 13px; }
.pressed { background: #dce1e3; box-shadow: inset 0 0 0 1px #bdc3c5; width: 18px; height: 18px; }
.rule { width: 1px; height: 18px; background: #ccd0d2; }
.grip { height: 10px; border-left: 1px dotted #aaa; }
.layer-tools { height: 28px; }
.layer-tools .grip { margin-right: 7px; }
.layer-tools .more { margin: 0 6px; }
.filter { display: flex; align-items: center; gap: 4px; padding: 0 10px 0 6px; height: 22px; }
.filter > button:last-child { margin-left: 4px; }
.filter-box { display: flex; flex: 1; height: 20px; border: 1px solid #b9bdbf; background: #fff; padding-right: 3px; color: #8c9193; }
.filter-box input { flex: 1; min-width: 0; }
.tree { display: grid; grid-auto-rows: 1fr; height: 158px; margin-top: 4px; }
.tree li, .layer-list li { display: flex; align-items: center; gap: 3px; padding-left: 9px; white-space: nowrap; }
.tree li { gap: 2px; }
.tree .root, .layer-list .root { padding-left: 4px; }
.tw { width: 7px; height: 7px; margin-right: 3px; }
.branch { flex: none; width: 7px; margin-right: 3px; border-top: 1px solid #b9bdc0; }
.insert-line { height: 2px; margin: 4px 4px 0 6px; background: #8fca7a; }
.hscroll { display: flex; height: 14px; margin: 233px 4px 0 3px; border: 1px solid #d9dcde; background: #eceff0; color: #999; }
.hscroll button { width: 12px; padding-left: 3px; }
.hscroll .thumb { flex: 1; background: #fbfcfd; border: 1px solid #c5c9cb; }
.trio { display: flex; margin-left: 3px; }
.trio .pressed { width: 19px; height: 20px; }
.picker { display: flex; align-items: center; height: 19px; margin: 0 4px 0 3px; border: 1px solid #b9bdbf; }
.picker button { width: 19px; height: 17px; border-right: 1px solid #b9bdbf; }
.picker select { flex: 1; min-width: 0; height: 17px; padding-left: 6px; appearance: none; text-overflow: clip; border-right: 1px solid #b9bdbf; }
.picker > svg { width: 6px; height: 6px; margin: 0 3px; }
.layer-list { display: grid; grid-auto-rows: 16px; }
.layer-list li { gap: 5px; }
.layer-list .tw { margin-right: 1px; }

/* Graphics area */
.canvas { position: relative; flex: 1; overflow: hidden; background: linear-gradient(#e5e9ea, #e8eaeb 20%, #e8e9eb); }
.view-tools { position: absolute; left: 741px; top: 5px; display: flex; width: 337px; height: 26px; padding: 2px; background: #f8fbfc; border: 1px solid #c3c8ca; }
.view-tools button { flex: 1; height: 20px; }
.view-tools svg { width: 14px; height: 14px; }
.model { position: absolute; left: 561px; top: 139px; width: 740px; height: 740px; }

/* View Manager */
.dialog { position: absolute; left: 1378px; top: 219px; width: 262px; height: 340px; display: flex; flex-direction: column; border: 1px solid #c0c4c6; border-radius: 5px; background: #eef0f1; box-shadow: 0 10px 24px rgba(0, 0, 0, .25), 0 0 6px rgba(0, 0, 0, .15); }
.dialog header { display: flex; align-items: center; height: 26px; padding: 0 7px; background: #e0e3e4; border-radius: 5px 5px 0 0; }
.dialog h2 { flex: 1; margin: 0; padding-left: 10px; font-size: 9px; font-weight: 500; text-align: center; }
.dtabs { display: grid; height: 19px; margin: 0 2px; border-top: 1px solid #d3d7d9; color: #8c9193; }
.dtabs button { border-right: 1px solid #dde0e2; }
.dtabs button:last-child { border-right: 0; }
.first { grid-template-columns: 73px 55px 70px 1fr; }
.second { grid-template-columns: 66px 61px 85px 1fr; }
.dtabs .on { background: #fdfdfd; color: #43484a; }
.dbody { display: flex; flex-direction: column; flex: 1; gap: 6px; margin: 0 2px; padding: 5px 2px 0; background: #fdfdfd; }
.dactions { display: flex; height: 23px; gap: 4px; }
.dactions button, .dialog footer button { border: 1px solid #c3c7c9; background: #fcfdfd; }
.dactions .new { width: 36px; margin-right: auto; background: #eceeef; border-color: #e0e3e4; }
.edit { width: 43px; gap: 10px; }
.options { width: 80px; gap: 6px; margin-right: 38px; }
.dlist { flex: 1; border: 1px solid #b9bdbf; background: #fff; padding: 1px; }
.dhead { height: 17px; background: #f8f9fa; border-bottom: 1px solid #d9dcde; }
.dhead span { display: block; width: 101px; line-height: 17px; text-align: center; border-right: 1px solid #d9dcde; }
.name-edit { position: relative; }
.name-edit::after { content: ""; position: absolute; left: 10px; top: 4px; width: 1px; height: 10px; background: #333; }
.name-edit input { display: block; width: 101px; height: 18px; padding: 0 3px; border: 1px solid #b9bdbf; outline: 0; background: #fff; }
.ditem { display: flex; align-items: center; height: 18px; gap: 2px; padding-left: 3px; }
.dialog footer { display: flex; justify-content: space-between; padding: 6px 4px 3px; }
.dialog footer button { height: 19px; padding: 0 7px; }
.dialog footer button:first-child { width: 73px; }
```
